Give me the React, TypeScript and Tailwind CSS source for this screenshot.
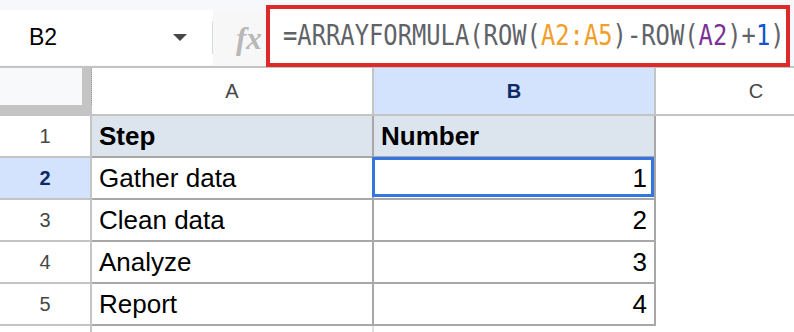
import React from "react";

const rows = [
  { n: "1", a: "Step", b: "Number", head: true },
  { n: "2", a: "Gather data", b: "1", selected: true },
  { n: "3", a: "Clean data", b: "2" },
  { n: "4", a: "Analyze", b: "3" },
  { n: "5", a: "Report", b: "4" },
];

const sans = "font-['Liberation_Sans',Arial,sans-serif]";

const FormulaBar: React.FC = () => (
  <div className="flex h-[66px] bg-[#f6f8fb]">
    <div className="mt-[10px] flex h-[55px] w-[213px] shrink-0 items-center bg-white">
      <span className={`${sans} pl-[29px] text-[23px] text-black`}>B2</span>
      <svg className="ml-auto mr-[25px]" width="14" height="7" viewBox="0 0 14 7">
        <path d="M0 0h14L7 7z" fill="#444746" />
      </svg>
      <div className="h-[33px] w-px bg-[#d5dde8]" />
    </div>
    <div className="mt-[10px] flex h-[56px] w-[53px] shrink-0 items-center bg-[#f7f7f7] pl-[23px]">
      <span className="font-['Liberation_Serif',serif] text-[31px] font-bold italic leading-none text-[#b8b8b8]">
        fx
      </span>
    </div>
    <div className="mt-[5px] mr-[4px] flex h-[62px] flex-1 items-center overflow-hidden border-[4px] border-[#dc2a2a] bg-white pl-[13px]">
      <span className="inline-block origin-left scale-x-[0.85] whitespace-nowrap font-['DejaVu_Sans_Mono',monospace] text-[28px] leading-none text-[#5f6368]">
        =ARRAYFORMULA(ROW(<span className="text-[#f29d2a]">A2:A5</span>)-ROW(<span className="text-[#7b3294]">A2</span>)+<span className="text-[#1155cc]">1</span>)
      </span>
    </div>
  </div>
);

export default function App() {
  return (
    <div className={`${sans} h-[332px] w-[794px] overflow-hidden bg-white`}>
      <FormulaBar />

      {/* column headers */}
      <div className="flex h-[50px] border-y-2 border-[#c4c4c4]">
        <div className="flex w-[92px] shrink-0 flex-col bg-[#c4c4c4]">
          <div className="flex h-[37px]">
            <div className="w-[82px] bg-[#f8f9fa]" />
            <div className="w-[9px]" />
            <div className="w-px border-r border-dotted border-[#9a9a9a]" />
          </div>
        </div>
        <div className="flex w-[282px] shrink-0 items-center justify-center border-r-2 border-[#c4c4c4] text-[20px] text-[#444746]">
          A
        </div>
        <div className="flex w-[282px] shrink-0 items-center justify-center border-r-2 border-[#c4c4c4] bg-[#d3e3fd] text-[20px] font-bold text-[#0b2a66]">
          B
        </div>
        <div className="flex w-[200px] shrink-0 items-center justify-center text-[20px] text-[#444746]">
          C
        </div>
      </div>

      {rows.map((r) => (
        <div key={r.n} className="flex h-[42px]">
          <div
            className={`flex w-[92px] shrink-0 items-center justify-center border-r-2 border-b-2 border-[#c4c4c4] text-[20px] ${
              r.selected ? "bg-[#d3e3fd] font-bold text-[#0b2a66]" : "text-[#444746]"
            }`}
          >
            {r.n}
          </div>
          <div
            className={`flex w-[282px] shrink-0 items-center border-r-2 border-b-2 border-[#a8a8a8] pl-[7px] text-[26px] text-black ${
              r.head ? "bg-[#dce4ee] font-bold" : ""
            }`}
          >
            {r.a}
          </div>
          <div
            className={`relative flex w-[282px] shrink-0 items-center border-r-2 border-b-2 border-[#a8a8a8] text-[26px] text-black ${
              r.head ? "bg-[#dce4ee] pl-[7px] font-bold" : "justify-end pr-[7px]"
            }`}
          >
            {r.b}
            {r.selected && (
              <div className="absolute -left-[2px] -top-[1px] right-0 bottom-[1px] border-[3px] border-[#3574e3]" />
            )}
          </div>
          <div className="flex-1" />
        </div>
      ))}

      <div className="flex h-[10px]">
        <div className="w-[92px] shrink-0 border-r-2 border-[#c4c4c4]" />
        <div className="w-[282px] shrink-0 border-r-2 border-[#e0e0e0]" />
      </div>
    </div>
  );
}
